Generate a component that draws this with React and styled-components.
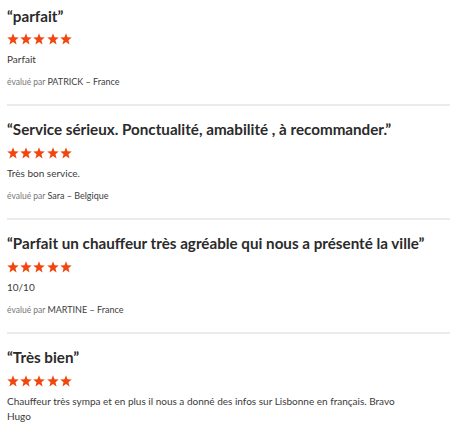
import React from "react";
import styled, { createGlobalStyle } from "styled-components";

const Global = createGlobalStyle`
  html, body { margin: 0; padding: 0; background: #fff; }
  body { font-family: Lato, "Open Sans", sans-serif; color: #333; }
`;

const List = styled.div`
  padding: 0 0 0 7px;
  width: 443px;
`;

const Review = styled.div`
  padding: 6.5px 0 16.3px;
  border-bottom: 2px solid ${(p) => (p.$last ? "transparent" : "#ebebeb")};
  & + & { padding-top: 14.5px; }
`;

const Title = styled.h3`
  margin: 0;
  font-size: 15.2px;
  line-height: 18px;
  font-weight: 700;
  color: #2b2b2b;
  white-space: nowrap;
`;

const Stars = styled.div`
  display: flex;
  gap: 1.2px;
  margin-top: 8.5px;
  height: 12px;
  align-items: center;
`;

const Text = styled.p`
  margin: 6.6px 0 0;
  font-size: 10px;
  line-height: 15px;
  color: #3a3a3a;
  max-width: 400px;
`;

const Credit = styled.div`
  margin-top: 9.1px;
  font-size: 8.5px;
  line-height: 12px;
  color: #777;
`;

const Name = styled.span`
  color: #3d3d3d;
  font-size: 9px;
`;

const Star = () => (
  <svg width="12" height="12" viewBox="0 0 24 24">
    <polygon
      fill="#f1470f"
      points="12,0.5 15,8.4 23.5,8.9 16.9,14.3 19.1,22.8 12,18.1 4.9,22.8 7.1,14.3 0.5,8.9 9,8.4"
    />
  </svg>
);

const reviews = [
  { title: "“parfait”", text: "Parfait", name: "PATRICK", country: "France" },
  {
    title: "“Service sérieux. Ponctualité, amabilité , à recommander.”",
    text: "Très bon service.",
    name: "Sara",
    country: "Belgique",
  },
  {
    title: "“Parfait un chauffeur très agréable qui nous a présenté la ville”",
    text: "10/10",
    name: "MARTINE",
    country: "France",
  },
  {
    title: "“Très bien”",
    text: "Chauffeur très sympa et en plus il nous a donné des infos sur Lisbonne en français. Bravo Hugo",
  },
];

export default function App() {
  return (
    <>
      <Global />
      <List>
        {reviews.map((r, i) => (
          <Review key={i} $last={i === reviews.length - 1}>
            <Title>{r.title}</Title>
            <Stars>
              {[0, 1, 2, 3, 4].map((s) => (
                <Star key={s} />
              ))}
            </Stars>
            <Text>{r.text}</Text>
            {r.name && (
              <Credit>
                évalué par <Name>{r.name} – {r.country}</Name>
              </Credit>
            )}
          </Review>
        ))}
      </List>
    </>
  );
}
